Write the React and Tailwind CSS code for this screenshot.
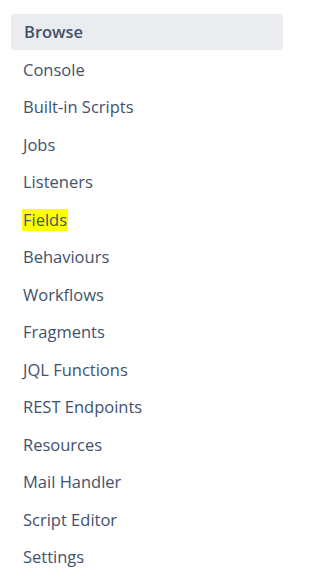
import React from "react";

const items = [
  "Browse",
  "Console",
  "Built-in Scripts",
  "Jobs",
  "Listeners",
  "Fields",
  "Behaviours",
  "Workflows",
  "Fragments",
  "JQL Functions",
  "REST Endpoints",
  "Resources",
  "Mail Handler",
  "Script Editor",
  "Settings",
];

export default function App() {
  return (
    <div
      className="w-[294px] h-[581px] bg-white pt-[14px] pl-[11px] pr-[11px]"
      style={{ fontFamily: '"Open Sans", "Noto Sans", sans-serif' }}
    >
      <ul className="flex flex-col gap-[1.5px]">
        {items.map((label, i) => (
          <li
            key={label}
            className={
              i === 0
                ? "h-9 flex items-center pl-[13px] rounded-[3px] bg-[#ebecf0] text-[#42526e] text-[16.5px] font-semibold"
                : "h-9 flex items-center pl-[12px] text-[#42526e] text-[16.5px] pt-px"
            }
          >
            {label === "Fields" ? (
              <span className="bg-[#ffff00] px-px leading-[22px] -ml-px">{label}</span>
            ) : (
              label
            )}
          </li>
        ))}
      </ul>
    </div>
  );
}
